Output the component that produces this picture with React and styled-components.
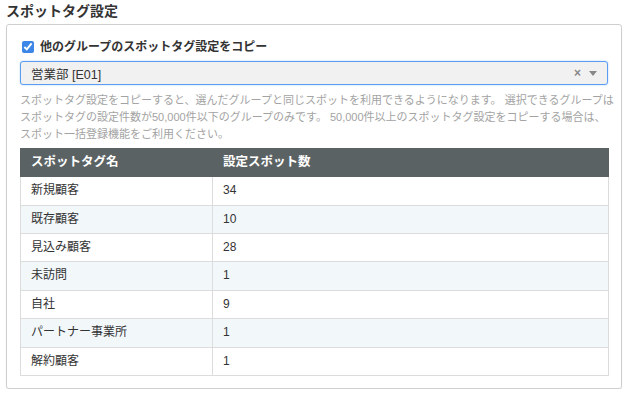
import React from 'react';
import styled, { createGlobalStyle } from 'styled-components';

const GlobalStyle = createGlobalStyle`
  html, body {
    margin: 0;
    padding: 0;
    background: #fff;
  }
  body {
    font-family: "Liberation Sans", "Noto Sans CJK JP", sans-serif;
    color: #333;
  }
`;

const Page = styled.div`
  padding: 3px 6px 0 6px;
  width: 616px;
`;

const Title = styled.h3`
  margin: 0 0 4px 0;
  font-size: 14px;
  line-height: 17px;
  font-weight: bold;
  color: #333;
`;

const Panel = styled.div`
  border: 1px solid #cfcfcf;
  border-radius: 3px;
  box-shadow: 0 1px 1px rgba(0, 0, 0, 0.12);
  padding: 14px 13px 12px 13px;
`;

const CheckRow = styled.label`
  display: flex;
  align-items: center;
  gap: 6px;
  margin-left: 2px;
  font-size: 12px;
  font-weight: bold;
  line-height: 16px;
`;

const Check = styled.input`
  margin: 0;
  width: 12px;
  height: 12px;
  accent-color: #3b86e6;
`;

const Select = styled.div`
  display: flex;
  align-items: center;
  margin-top: 6px;
  height: 22px;
  padding: 0 10px;
  background: #f1f1f1;
  border: 1px solid #5a9df0;
  border-radius: 3px;
  box-shadow: 0 0 2px rgba(80, 150, 240, 0.45);
  font-size: 12.5px;
  color: #333;
`;

const SelectText = styled.span`
  flex: 1;
`;

const Clear = styled.span`
  font-size: 12px;
  font-weight: bold;
  color: #888;
  margin-right: 8px;
`;

const Arrow = styled.span`
  width: 0;
  height: 0;
  border-left: 4.5px solid transparent;
  border-right: 4.5px solid transparent;
  border-top: 5px solid #888;
`;

const Help = styled.p`
  margin: 7px 0 5px 0;
  font-size: 11px;
  line-height: 17px;
  color: #a3a3a3;
  white-space: nowrap;
`;

const Table = styled.table`
  width: 589px;
  border-collapse: collapse;
  font-size: 12px;
`;

const Th = styled.th`
  background: #5b6264;
  color: #fff;
  text-align: left;
  font-weight: bold;
  font-size: 12.5px;
  padding: 5px 10px;
  line-height: 17.2px;
  border: 1px solid #5b6264;
  border-left: ${p => (p.$divider ? '1px solid #7b8284' : '1px solid #5b6264')};
  width: ${p => p.$w || 'auto'};
`;

const Row = styled.tr`
  background: ${p => (p.$alt ? '#f2f7fa' : '#fff')};
`;

const Td = styled.td`
  padding: 5px 10px;
  line-height: 17.4px;
  border: 1px solid #dcdcdc;
  color: #333;
`;

const rows = [
  ['新規顧客', 34],
  ['既存顧客', 10],
  ['見込み顧客', 28],
  ['未訪問', 1],
  ['自社', 9],
  ['パートナー事業所', 1],
  ['解約顧客', 1]
];

const App = () => (
  <>
    <GlobalStyle />
    <Page>
      <Title>スポットタグ設定</Title>
      <Panel>
        <CheckRow>
          <Check type="checkbox" defaultChecked />
          他のグループのスポットタグ設定をコピー
        </CheckRow>
        <Select>
          <SelectText>営業部 [E01]</SelectText>
          <Clear>×</Clear>
          <Arrow />
        </Select>
        <Help>
          スポットタグ設定をコピーすると、選んだグループと同じスポットを利用できるようになります。 選択できるグループは
          <br />
          スポットタグの設定件数が50,000件以下のグループのみです。 50,000件以上のスポットタグ設定をコピーする場合は、
          <br />
          スポット一括登録機能をご利用ください。
        </Help>
        <Table>
          <thead>
            <tr>
              <Th $w="171px">スポットタグ名</Th>
              <Th $divider>設定スポット数</Th>
            </tr>
          </thead>
          <tbody>
            {rows.map(([name, count], i) => (
              <Row key={name} $alt={i % 2 === 1}>
                <Td>{name}</Td>
                <Td>{count}</Td>
              </Row>
            ))}
          </tbody>
        </Table>
      </Panel>
    </Page>
  </>
);

export default App;
